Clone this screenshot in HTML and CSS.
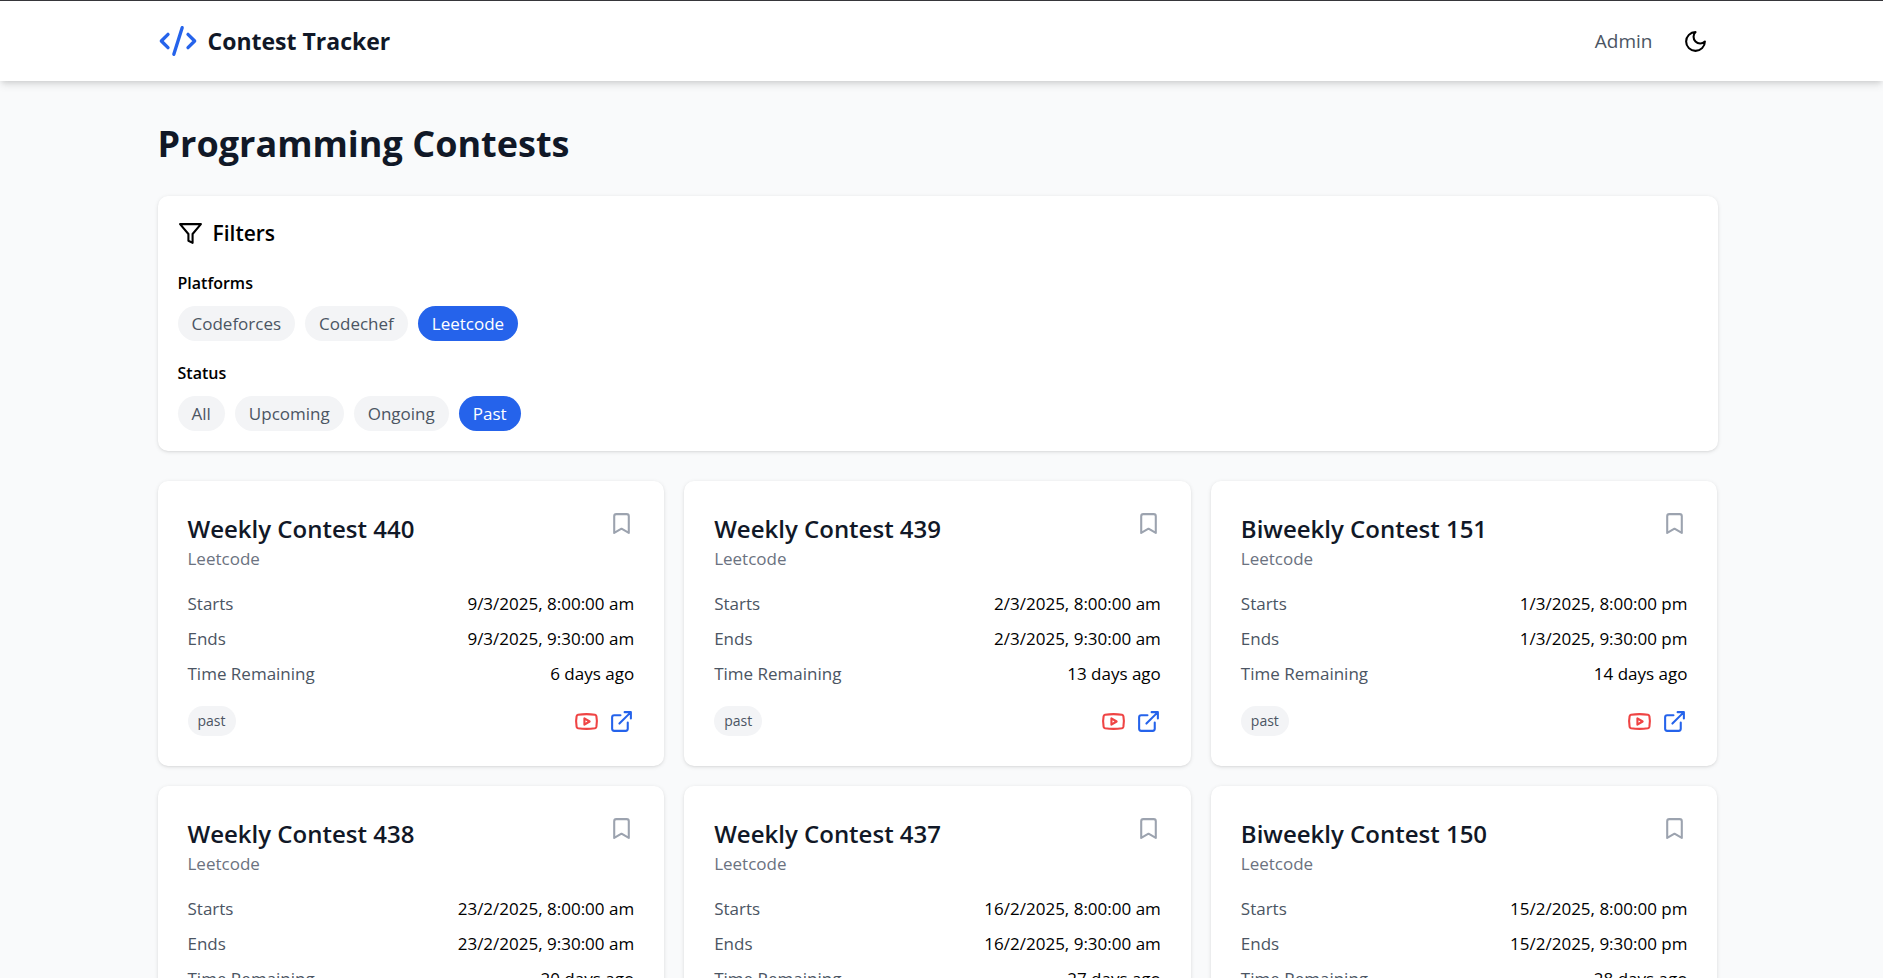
FILE: index.html
```html
<!DOCTYPE html>
<html lang="en">
<head>
<meta charset="utf-8">
<title>Contest Tracker</title>
<meta name="viewport" content="width=device-width, initial-scale=1">
<link rel="stylesheet" href="styles.css">
</head>
<body>
<svg class="sprite" aria-hidden="true">
  <symbol id="code" viewBox="0 0 24 24"><path d="m18 16 4-4-4-4M6 8l-4 4 4 4M14.5 4l-5 16"/></symbol>
  <symbol id="moon" viewBox="0 0 24 24"><path d="M12 3a6 6 0 0 0 9 9 9 9 0 1 1-9-9Z"/></symbol>
  <symbol id="filter" viewBox="0 0 24 24"><path d="M22 3H2l8 9.46V19l4 2v-8.54L22 3z"/></symbol>
  <symbol id="bookmark" viewBox="0 0 24 24"><path d="m19 21-7-4-7 4V5a2 2 0 0 1 2-2h10a2 2 0 0 1 2 2v16z"/></symbol>
  <symbol id="youtube" viewBox="0 0 24 24"><path d="M2.5 17a24.12 24.12 0 0 1 0-10 2 2 0 0 1 1.4-1.4 49.56 49.56 0 0 1 16.2 0A2 2 0 0 1 21.5 7a24.12 24.12 0 0 1 0 10 2 2 0 0 1-1.4 1.4 49.55 49.55 0 0 1-16.2 0A2 2 0 0 1 2.5 17"/><path d="m10 15 5-3-5-3z"/></symbol>
  <symbol id="external" viewBox="0 0 24 24"><path d="M15 3h6v6M10 14 21 3M18 13v6a2 2 0 0 1-2 2H5a2 2 0 0 1-2-2V8a2 2 0 0 1 2-2h6"/></symbol>
</svg>

<header class="navbar">
  <div class="container navbar-inner">
    <a class="brand" href="#"><svg class="icon icon-lg"><use href="#code"/></svg><span>Contest Tracker</span></a>
    <nav class="nav-actions">
      <a class="nav-link" href="#">Admin</a>
      <button class="icon-button theme-toggle" type="button" aria-label="Toggle dark mode"><svg class="icon"><use href="#moon"/></svg></button>
    </nav>
  </div>
</header>

<main class="container page">
  <h1 class="page-title">Programming Contests</h1>

  <section class="filters">
    <h2 class="filters-title"><svg class="icon"><use href="#filter"/></svg>Filters</h2>
    <div class="filter-group">
      <h3 class="filter-label" id="platforms">Platforms</h3>
      <div class="pills" role="group" aria-labelledby="platforms">
        <button class="pill" type="button">Codeforces</button>
        <button class="pill" type="button">Codechef</button>
        <button class="pill pill-active" type="button" aria-pressed="true">Leetcode</button>
      </div>
    </div>
    <div class="filter-group">
      <h3 class="filter-label" id="status">Status</h3>
      <div class="pills" role="group" aria-labelledby="status">
        <button class="pill" type="button">All</button>
        <button class="pill" type="button">Upcoming</button>
        <button class="pill" type="button">Ongoing</button>
        <button class="pill pill-active" type="button" aria-pressed="true">Past</button>
      </div>
    </div>
  </section>

  <section class="contests">
    <article class="card">
      <div class="card-head">
        <div><h2 class="card-title">Weekly Contest 440</h2><p class="card-platform">Leetcode</p></div>
        <button class="icon-button bookmark" type="button" aria-label="Bookmark"><svg class="icon"><use href="#bookmark"/></svg></button>
      </div>
      <dl class="details">
        <div class="detail"><dt>Starts</dt><dd>9/3/2025, 8:00:00 am</dd></div>
        <div class="detail"><dt>Ends</dt><dd>9/3/2025, 9:30:00 am</dd></div>
        <div class="detail"><dt>Time Remaining</dt><dd>6 days ago</dd></div>
      </dl>
      <div class="card-foot">
        <span class="badge">past</span>
        <div class="links">
          <a class="link-video" href="#" aria-label="Video solution"><svg class="icon"><use href="#youtube"/></svg></a>
          <a class="link-open" href="#" aria-label="Open contest"><svg class="icon"><use href="#external"/></svg></a>
        </div>
      </div>
    </article>

    <article class="card">
      <div class="card-head">
        <div><h2 class="card-title">Weekly Contest 439</h2><p class="card-platform">Leetcode</p></div>
        <button class="icon-button bookmark" type="button" aria-label="Bookmark"><svg class="icon"><use href="#bookmark"/></svg></button>
      </div>
      <dl class="details">
        <div class="detail"><dt>Starts</dt><dd>2/3/2025, 8:00:00 am</dd></div>
        <div class="detail"><dt>Ends</dt><dd>2/3/2025, 9:30:00 am</dd></div>
        <div class="detail"><dt>Time Remaining</dt><dd>13 days ago</dd></div>
      </dl>
      <div class="card-foot">
        <span class="badge">past</span>
        <div class="links">
          <a class="link-video" href="#" aria-label="Video solution"><svg class="icon"><use href="#youtube"/></svg></a>
          <a class="link-open" href="#" aria-label="Open contest"><svg class="icon"><use href="#external"/></svg></a>
        </div>
      </div>
    </article>

    <article class="card">
      <div class="card-head">
        <div><h2 class="card-title">Biweekly Contest 151</h2><p class="card-platform">Leetcode</p></div>
        <button class="icon-button bookmark" type="button" aria-label="Bookmark"><svg class="icon"><use href="#bookmark"/></svg></button>
      </div>
      <dl class="details">
        <div class="detail"><dt>Starts</dt><dd>1/3/2025, 8:00:00 pm</dd></div>
        <div class="detail"><dt>Ends</dt><dd>1/3/2025, 9:30:00 pm</dd></div>
        <div class="detail"><dt>Time Remaining</dt><dd>14 days ago</dd></div>
      </dl>
      <div class="card-foot">
        <span class="badge">past</span>
        <div class="links">
          <a class="link-video" href="#" aria-label="Video solution"><svg class="icon"><use href="#youtube"/></svg></a>
          <a class="link-open" href="#" aria-label="Open contest"><svg class="icon"><use href="#external"/></svg></a>
        </div>
      </div>
    </article>

    <article class="card">
      <div class="card-head">
        <div><h2 class="card-title">Weekly Contest 438</h2><p class="card-platform">Leetcode</p></div>
        <button class="icon-button bookmark" type="button" aria-label="Bookmark"><svg class="icon"><use href="#bookmark"/></svg></button>
      </div>
      <dl class="details">
        <div class="detail"><dt>Starts</dt><dd>23/2/2025, 8:00:00 am</dd></div>
        <div class="detail"><dt>Ends</dt><dd>23/2/2025, 9:30:00 am</dd></div>
        <div class="detail"><dt>Time Remaining</dt><dd>20 days ago</dd></div>
      </dl>
      <div class="card-foot">
        <span class="badge">past</span>
        <div class="links">
          <a class="link-video" href="#" aria-label="Video solution"><svg class="icon"><use href="#youtube"/></svg></a>
          <a class="link-open" href="#" aria-label="Open contest"><svg class="icon"><use href="#external"/></svg></a>
        </div>
      </div>
    </article>

    <article class="card">
      <div class="card-head">
        <div><h2 class="card-title">Weekly Contest 437</h2><p class="card-platform">Leetcode</p></div>
        <button class="icon-button bookmark" type="button" aria-label="Bookmark"><svg class="icon"><use href="#bookmark"/></svg></button>
      </div>
      <dl class="details">
        <div class="detail"><dt>Starts</dt><dd>16/2/2025, 8:00:00 am</dd></div>
        <div class="detail"><dt>Ends</dt><dd>16/2/2025, 9:30:00 am</dd></div>
        <div class="detail"><dt>Time Remaining</dt><dd>27 days ago</dd></div>
      </dl>
      <div class="card-foot">
        <span class="badge">past</span>
        <div class="links">
          <a class="link-video" href="#" aria-label="Video solution"><svg class="icon"><use href="#youtube"/></svg></a>
          <a class="link-open" href="#" aria-label="Open contest"><svg class="icon"><use href="#external"/></svg></a>
        </div>
      </div>
    </article>

    <article class="card">
      <div class="card-head">
        <div><h2 class="card-title">Biweekly Contest 150</h2><p class="card-platform">Leetcode</p></div>
        <button class="icon-button bookmark" type="button" aria-label="Bookmark"><svg class="icon"><use href="#bookmark"/></svg></button>
      </div>
      <dl class="details">
        <div class="detail"><dt>Starts</dt><dd>15/2/2025, 8:00:00 pm</dd></div>
        <div class="detail"><dt>Ends</dt><dd>15/2/2025, 9:30:00 pm</dd></div>
        <div class="detail"><dt>Time Remaining</dt><dd>28 days ago</dd></div>
      </dl>
      <div class="card-foot">
        <span class="badge">past</span>
        <div class="links">
          <a class="link-video" href="#" aria-label="Video solution"><svg class="icon"><use href="#youtube"/></svg></a>
          <a class="link-open" href="#" aria-label="Open contest"><svg class="icon"><use href="#external"/></svg></a>
        </div>
      </div>
    </article>
  </section>
</main>
</body>
</html>
```
FILE: styles.css
```css
*,
*::before,
*::after {
  box-sizing: border-box;
}

body {
  margin: 0;
  padding: 0;
  background: #f9fafb;
  color: #000;
  font-family: "Segoe UI", "Open Sans", "Noto Sans", sans-serif;
  font-size: 17px;
  line-height: 25px;
}

h1, h2, h3, p, dl, dd {
  margin: 0;
}

button {
  border: 0;
  font: inherit;
  cursor: pointer;
}

a {
  color: inherit;
  text-decoration: none;
}

.sprite {
  display: none;
}

.icon {
  display: block;
  width: 25px;
  height: 25px;
  fill: none;
  stroke: currentColor;
  stroke-width: 2;
  stroke-linecap: round;
  stroke-linejoin: round;
}

.icon-lg {
  width: 40px;
  height: 40px;
  color: #2563eb;
}

.container {
  width: 100%;
  max-width: 1608px;
  margin: 0 auto;
  padding: 0 28px 0 20px;
}

.navbar {
  border-top: 1px solid #36363a;
  background: #fff;
  box-shadow: 0 5px 8px -1px rgba(0, 0, 0, 0.1), 0 3px 5px -2px rgba(0, 0, 0, 0.1);
}

.navbar-inner {
  display: flex;
  align-items: center;
  justify-content: space-between;
  min-height: 80px;
}

.brand {
  display: flex;
  align-items: center;
  gap: 10px;
  color: #111827;
  font-size: 23px;
  font-weight: 700;
  line-height: 35px;
}

.nav-actions {
  display: flex;
  align-items: center;
  gap: 20px;
}

.nav-link {
  color: #4b5563;
  font-size: 19px;
  line-height: 30px;
}

.icon-button {
  padding: 0;
  background: none;
  color: inherit;
}

.theme-toggle {
  padding: 10px;
}

.page {
  padding-top: 40px;
  padding-bottom: 40px;
}

.page-title {
  margin-bottom: 30px;
  color: #111827;
  font-size: 36px;
  font-weight: 700;
  line-height: 45px;
}

.filters,
.card {
  border-radius: 10px;
  background: #fff;
  box-shadow: 0 1px 4px rgba(0, 0, 0, 0.1), 0 1px 3px -1px rgba(0, 0, 0, 0.1);
}

.filters {
  display: flex;
  flex-direction: column;
  gap: 20px;
  margin-bottom: 30px;
  padding: 20px;
}

.filters-title {
  display: flex;
  align-items: center;
  gap: 10px;
  font-size: 21px;
  font-weight: 600;
  line-height: 35px;
}

.filter-label {
  margin-bottom: 10px;
  font-size: 16px;
  font-weight: 600;
  line-height: 25px;
}

.pills {
  display: flex;
  flex-wrap: wrap;
  gap: 10px;
}

.pill {
  padding: 5px 14px;
  border-radius: 18px;
  background: #f3f4f6;
  color: #4b5563;
}

.pill-active {
  background: #2563eb;
  color: #fff;
}

.contests {
  display: grid;
  grid-template-columns: repeat(3, 1fr);
  gap: 20px;
}

.card {
  padding: 30px;
}

.card-head {
  display: flex;
  align-items: flex-start;
  justify-content: space-between;
  margin-bottom: 20px;
}

.card-title {
  color: #111827;
  font-size: 24px;
  font-weight: 600;
  line-height: 35px;
}

.card-platform {
  color: #6b7280;
}

.bookmark {
  color: #9ca3af;
}

.details {
  display: grid;
  gap: 10px;
  margin-bottom: 20px;
}

.detail {
  display: flex;
  justify-content: space-between;
}

.detail dt {
  color: #4b5563;
}

.card-foot {
  display: flex;
  align-items: center;
  justify-content: space-between;
}

.badge {
  padding: 5px 10px;
  border-radius: 15px;
  background: #f3f4f6;
  color: #4b5563;
  font-size: 14px;
  line-height: 20px;
}

.links {
  display: flex;
  gap: 10px;
}

.link-video {
  color: #ef4444;
}

.link-open {
  color: #2563eb;
}

@media (max-width: 1100px) {
  .contests {
    grid-template-columns: repeat(2, 1fr);
  }
}

@media (max-width: 720px) {
  .contests {
    grid-template-columns: 1fr;
  }
}
```
